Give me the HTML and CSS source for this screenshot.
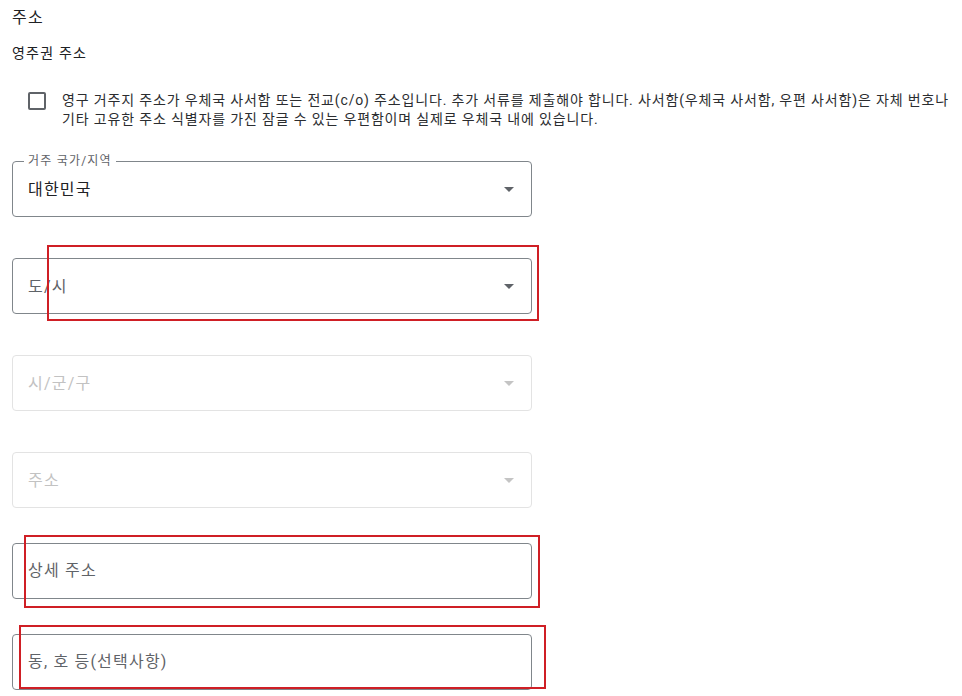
FILE: index.html
```html
<!DOCTYPE html>
<html lang="ko">
<head>
  <meta charset="UTF-8" />
  <meta name="viewport" content="width=device-width, initial-scale=1" />
  <title>주소</title>
  <link rel="stylesheet" href="styles.css">
</head>
<body>

<main class="form">
  <h2 class="title">주소</h2>
  <div class="subtitle">영주권 주소</div>

  <label class="check">
    <span class="check-box"></span>
    <span class="check-text">영구 거주지 주소가 우체국 사서함 또는 전교(c/o) 주소입니다. 추가 서류를 제출해야 합니다. 사서함(우체국 사서함, 우편 사서함)은 자체 번호나<br>기타 고유한 주소 식별자를 가진 잠글 수 있는 우편함이며 실제로 우체국 내에 있습니다.</span>
  </label>

  <div class="fields">
    <div class="field select filled">
      <span class="field-label">거주 국가/지역</span>
      <span class="field-value">대한민국</span>
      <span class="arrow"></span>
    </div>

    <div class="field select">
      <span class="field-value placeholder">도/시</span>
      <span class="arrow"></span>
    </div>

    <div class="field select disabled">
      <span class="field-value placeholder">시/군/구</span>
      <span class="arrow"></span>
    </div>

    <div class="field select disabled">
      <span class="field-value placeholder">주소</span>
      <span class="arrow"></span>
    </div>

    <div class="field text first-text">
      <input type="text" placeholder="상세 주소">
    </div>

    <div class="field text">
      <input type="text" placeholder="동, 호 등(선택사항)">
    </div>
  </div>

  <!-- review marks drawn on top of the form -->
  <div class="mark mark-city"></div>
  <div class="mark mark-detail"></div>
  <div class="mark mark-unit"></div>
</main>

</body>
</html>
```

FILE: styles.css
```css
body {
  margin: 0;
  font-family: Roboto, "Noto Sans CJK KR", sans-serif;
  color: #202124;
  background: #fff;
  letter-spacing: 0.075em;
}
.form {
  position: relative;
  padding: 6px 0 0 12px;
}
.title {
  margin: 0;
  font-size: 16px;
  font-weight: 400;
  line-height: 24px;
}
.subtitle {
  margin-top: 13px;
  font-size: 14px;
  line-height: 20px;
}
.check {
  display: flex;
  align-items: flex-start;
  gap: 16px;
  margin-top: 29px;
  padding-left: 16px;
}
.check-box {
  flex: none;
  box-sizing: border-box;
  width: 18px;
  height: 18px;
  border: 2px solid #5f6368;
  border-radius: 2px;
}
.check-text {
  font-size: 14px;
  line-height: 19px;
  margin-top: -1px;
  white-space: nowrap;
  letter-spacing: 0.06em;
  color: #2b2d30;
}
.fields {
  display: flex;
  flex-direction: column;
  gap: 41px;
  margin-top: 32px;
  width: 520px;
}
.field {
  position: relative;
  box-sizing: border-box;
  height: 56px;
  border: 1px solid #80868b;
  border-radius: 4px;
  display: flex;
  align-items: center;
  padding: 0 15px;
}
.fields .text {
  margin-top: -6px;
}
.field-label {
  position: absolute;
  top: -9px;
  left: 11px;
  padding: 0 4px;
  background: #fff;
  font-size: 12px;
  line-height: 16px;
  color: #5f6368;
}
.field-value {
  font-size: 16px;
  line-height: 24px;
  padding-top: 1px;
}
.placeholder {
  color: #5f6368;
}
.arrow {
  margin-left: auto;
  margin-right: 2px;
  width: 0;
  height: 0;
  border-left: 5px solid transparent;
  border-right: 5px solid transparent;
  border-top: 5px solid #5f6368;
}
.disabled {
  border-color: #e3e3e3;
}
.disabled .placeholder {
  color: #c2c2c2;
}
.disabled .arrow {
  border-top-color: #c4c4c4;
}
.field input {
  border: none;
  outline: none;
  padding: 0;
  width: 100%;
  font: inherit;
  font-size: 16px;
  line-height: 24px;
  letter-spacing: 0.075em;
  color: #202124;
  background: transparent;
}
.field input::placeholder {
  color: #5f6368;
}
.mark {
  position: absolute;
  box-sizing: border-box;
  border: 2px solid #cf1f25;
}
.mark-city {
  left: 47px;
  top: 245px;
  width: 492px;
  height: 76px;
}
.mark-detail {
  left: 24px;
  top: 535px;
  width: 516px;
  height: 73px;
}
.mark-unit {
  left: 19px;
  top: 625px;
  width: 527px;
  height: 64px;
}
```
